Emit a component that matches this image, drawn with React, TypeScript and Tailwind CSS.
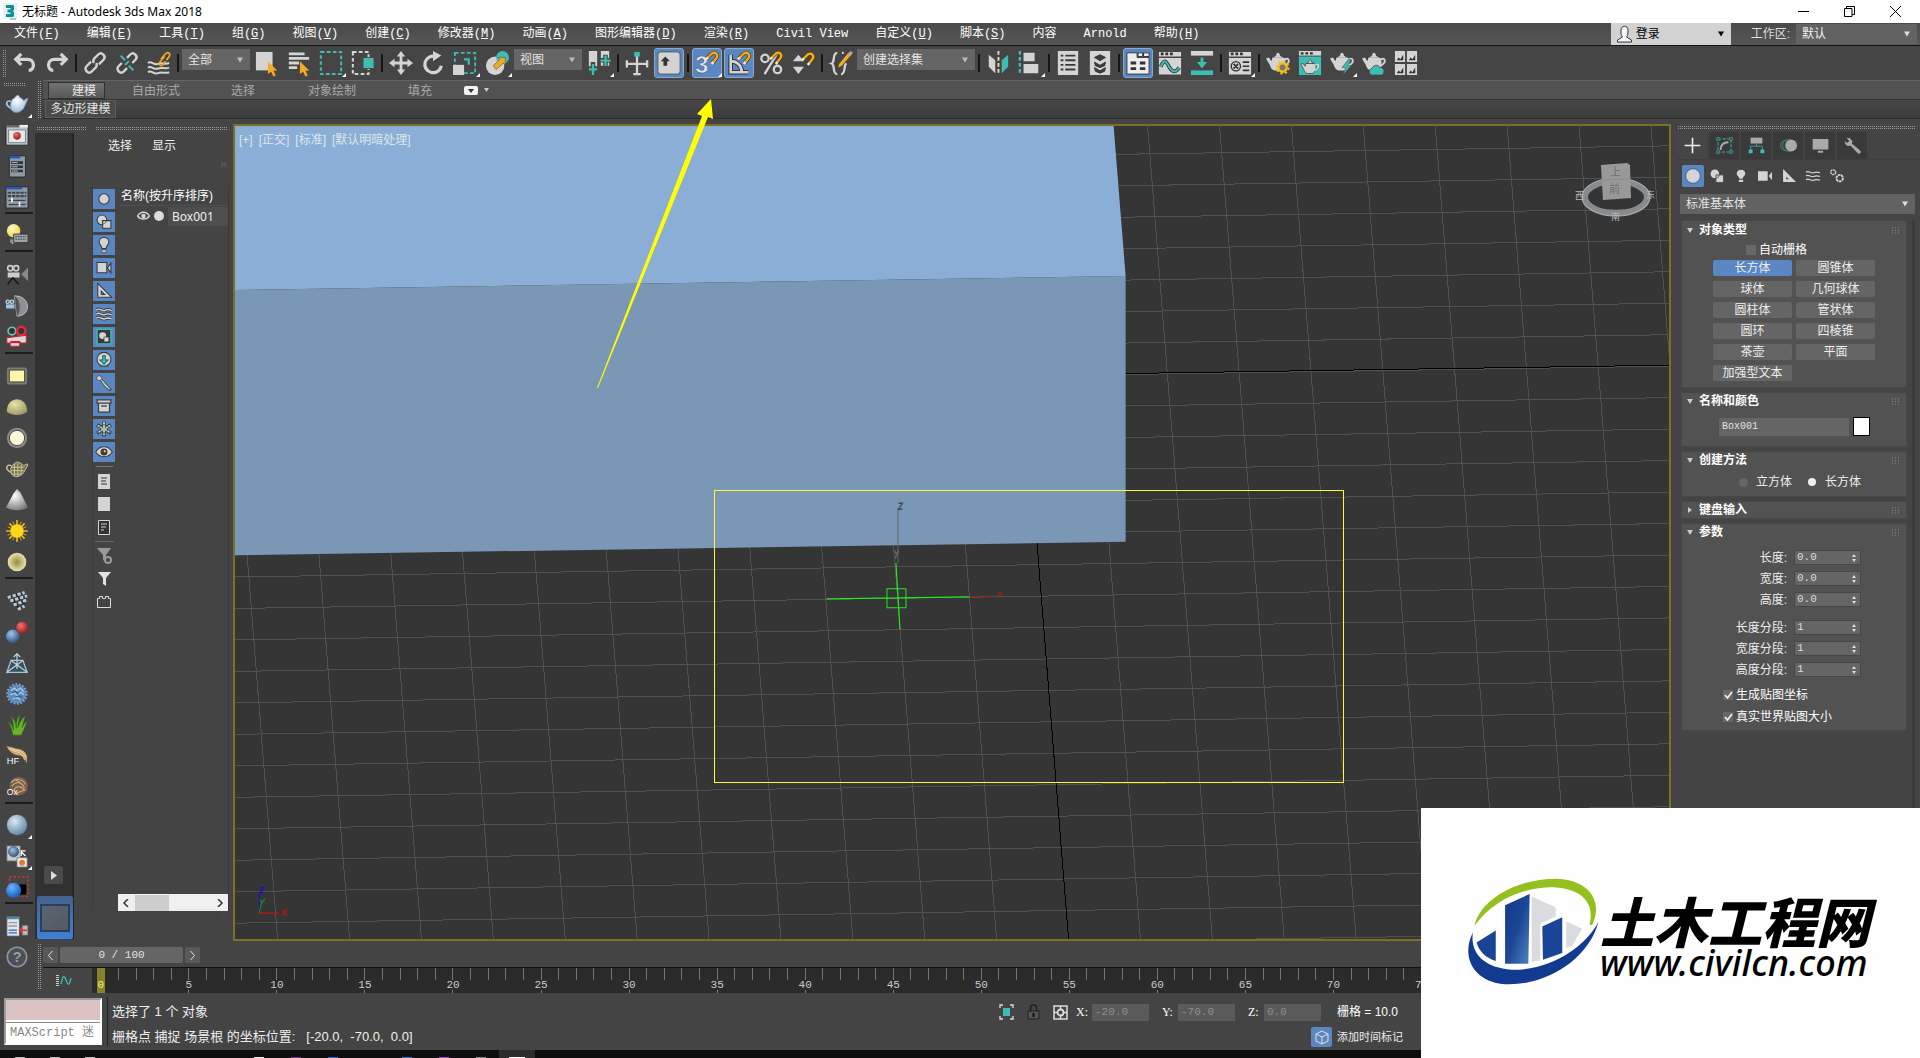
import React from "react";
import type { ReactNode } from "react";

const MONO = "font-['Liberation_Mono','Noto_Sans_CJK_SC',monospace]";
const SANS = "font-['Liberation_Sans','Noto_Sans_CJK_SC',sans-serif]";
const L = "#d4d4d4";
const T = "#3fbcb4";
const O = "#f2ac22";

/* ---------- small building blocks ---------- */

function Svg({ children, size = 26 }: { children: ReactNode; size?: number }) {
  return (
    <svg width={size} height={size} viewBox="0 0 26 26" fill="none" aria-hidden="true" className="overflow-visible">
      {children}
    </svg>
  );
}

function Tool({ label, active, corner, children }: { label: string; active?: boolean; corner?: boolean; children: ReactNode }) {
  return (
    <button aria-label={label} className="relative flex h-[34px] w-[32px] shrink-0 items-center justify-center">
      <span className={active ? "flex h-[30px] w-[30px] items-center justify-center rounded-[3px] border border-[#8aa9d0] bg-[#5a87c2]" : "flex"}>
        <Svg size={24}>{children}</Svg>
      </span>
      {corner && <span className="absolute right-[1px] bottom-[3px] size-[4px] bg-white [clip-path:polygon(100%_0,100%_100%,0_100%)]" />}
    </button>
  );
}

const Sep = () => (
  <div className="flex w-[6px] shrink-0 justify-center">
    <span className="h-[18px] w-[2px] bg-[#161616]" />
  </div>
);

function Caret({ color = "#dddddd" }: { color?: string }) {
  return (
    <svg width="8" height="6" viewBox="0 0 8 6" aria-hidden="true" className="pointer-events-none mr-[6px] self-center justify-self-end [grid-area:1/1]">
      <path d="M1 0.500h6L4 5.500z" fill={color} />
    </svg>
  );
}

function Drop({ label, value, className, caret }: { label: string; value: string; className: string; caret?: string }) {
  return (
    <div className={`grid shrink-0 ${className}`}>
      <select aria-label={label} className="h-full w-full appearance-none bg-transparent pl-[6px] outline-none [grid-area:1/1]">
        <option>{value}</option>
      </select>
      <Caret color={caret} />
    </div>
  );
}

const DOTS = "bg-[linear-gradient(#444444_1px,transparent_1px),linear-gradient(90deg,#444444_1px,#9a9a9a_1px)] bg-[size:2px_2px]";

const DotsH = ({ className = "" }: { className?: string }) => <div className={`h-[4px] ${DOTS} ${className}`} />;

/* ---------- title and menu ---------- */

function TitleBar() {
  return (
    <header className="flex h-[23px] shrink-0 items-center bg-white text-black">
      <svg width="17" height="18" viewBox="0 0 17 18" className="ml-[2px]" aria-hidden="true">
        <rect x="1" y="0" width="14" height="16" fill="#e2f1f2" />
        <path d="M4 2h7l1 1v4l-1.500 1L12 9v4l-1 1H4v-3h4.500V9.500H5.500v-3h3V5H4z" fill="#128e93" />
        <path d="M8 16h6" stroke="#5aa" strokeWidth="1" />
      </svg>
      <h1 className="ml-[3px] font-['Noto_Sans','Noto_Sans_CJK_SC',sans-serif] text-[12px] leading-[16px]">无标题 - Autodesk 3ds Max 2018</h1>
      <div className="mr-[2px] ml-auto flex">
        <button aria-label="最小化" className="flex h-[23px] w-[46px] items-center justify-center">
          <svg width="11" height="11" viewBox="0 0 11 11"><path d="M0 5.500h11" stroke="#000" /></svg>
        </button>
        <button aria-label="还原" className="flex h-[23px] w-[46px] items-center justify-center">
          <svg width="11" height="11" viewBox="0 0 11 11" fill="none" stroke="#000"><path d="M.5 2.500h7.500v8H.5zM2.500 2.500v-2h8v8H8" /></svg>
        </button>
        <button aria-label="关闭" className="flex h-[23px] w-[46px] items-center justify-center">
          <svg width="11" height="11" viewBox="0 0 11 11" stroke="#000"><path d="M0 0l11 11M11 0L0 11" /></svg>
        </button>
      </div>
    </header>
  );
}

const MENUS: [string, string?][] = [
  ["文件", "F"], ["编辑", "E"], ["工具", "T"], ["组", "G"], ["视图", "V"], ["创建", "C"], ["修改器", "M"], ["动画", "A"],
  ["图形编辑器", "D"], ["渲染", "R"], ["Civil View"], ["自定义", "U"], ["脚本", "S"], ["内容"], ["Arnold"], ["帮助", "H"],
];

function MenuBar() {
  return (
    <nav className="flex h-[23px] shrink-0 items-center border-b border-[#161616] bg-linear-to-b from-[#4a4a4a] to-[#565656]">
      <div className={`flex gap-[27px] pl-[14px] text-[12px] leading-[20px] whitespace-nowrap text-white ${MONO}`}>
        {MENUS.map(([t, k]) => (
          <button key={t}>{t}{k && <>(<u>{k}</u>)</>}</button>
        ))}
      </div>
      <div className="ml-auto flex h-full items-center text-[13px]">
        <div className="grid h-[22px] w-[120px] bg-[#d2d2d2] text-black">
          <svg width="17" height="18" viewBox="0 0 17 18" className="ml-[5px] self-center [grid-area:1/1]" aria-hidden="true">
            <path d="M5 5c0-5 7-5 7 0v3c0 2-1 3-1.500 4l5 3v2h-14v-2l5-3C6 11 5 10 5 8z" fill="#f4f8ff" stroke="#333" />
          </svg>
          <select aria-label="登录" className="h-[22px] w-full appearance-none bg-transparent pl-[25px] text-[12px] outline-none [grid-area:1/1]"><option>登录</option></select>
          <Caret color="#000000" />
        </div>
        <span className="mr-[6px] ml-[20px] text-[12px] text-[#dddddd]">工作区:</span>
        <Drop label="工作区" value="默认" className="mr-[3px] h-[20px] w-[121px] bg-[#626262] text-[12px] text-[#eeeeee]" />
      </div>
    </nav>
  );
}

/* ---------- main toolbar ---------- */

const Magnet = ({ x = 0, y = 0 }: { x?: number; y?: number }) => (
  <g transform={`translate(${x} ${y})`}>
    <path d="M13 8l5-5c4-3 8 1 5 5l-4 5" stroke="#5b3d05" strokeWidth="4" />
    <path d="M13 8l5-5c4-3 8 1 5 5l-4 5" stroke={O} strokeWidth="2.500" />
    <path d="M12 9l2-2M18 14l2-2" stroke="#eee" strokeWidth="2.500" />
  </g>
);
const Cursor = ({ x = 14, y = 11 }: { x?: number; y?: number }) => (
  <path transform={`translate(${x} ${y})`} d="M0 0l10 10-4 .5 2.500 5-2.500 1-2.500-5L0 14z" fill={O} />
);
const Pot = ({ outline }: { outline?: boolean }) => (
  <g stroke={outline ? "#3a3a3a" : "none"} strokeWidth="1">
    <path d="M7 7h12c3 3 3 8 0 11l-2 3H9c-3-1-4-3-5-6L0 8l3-1 3 4z" fill={L} />
    <path d="M11 5c0-4 4-4 4 0l3 2H8z" fill={L} />
    <path d="M20 9c5-2 6 2 3 5l-4 3" stroke={L} strokeWidth="2" fill="none" />
  </g>
);
const Window = () => (
  <>
    <path d="M1 1h24v5H1zM1 7.500h24v18H1z" fill={L} />
    <path d="M3 3h3M8 3h3M13 3h3" stroke="#333" strokeWidth="3" />
  </>
);

function Toolbar() {
  return (
    <div role="toolbar" className="flex h-[34px] shrink-0 items-center bg-[#454545]">
      <div className={`mr-[3px] ml-[2px] h-[28px] w-[4px] ${DOTS}`} />
      <Tool label="撤消"><path d="M9 3L3 9l6 6M4 9h12c8 0 8 12 1 12" stroke={L} strokeWidth="3.500" /></Tool>
      <Tool label="重做"><path d="M17 3l6 6-6 6M22 9H10c-8 0-8 12-1 12" stroke={L} strokeWidth="3.500" /></Tool>
      <Sep />
      <Tool label="链接"><g transform="rotate(-45 13 13)" stroke={L} strokeWidth="2.600"><path d="M11 9H4c-5 0-5 8 0 8h6c2 0 3-1 4-3" /><path d="M15 17h7c5 0 5-8 0-8h-6c-2 0-3 1-4 3" /></g></Tool>
      <Tool label="断开链接"><g transform="rotate(-45 13 13)" stroke={L} strokeWidth="2.600"><path d="M9 9H4c-5 0-5 8 0 8h5" /><path d="M17 17h5c5 0 5-8 0-8h-5" /></g><path d="M6 5l5 5M15 16l5 5M11 15l4-4" stroke={T} strokeWidth="2.200" /></Tool>
      <Tool label="绑定到空间扭曲"><path d="M1 13c4-3 6 3 11 1s7 1 12-1M1 18c4-3 6 3 11 1s7 1 12-1M1 23c4-3 6 3 11 1s7 1 12-1" stroke={L} strokeWidth="2.200" /><path d="M15 9l5-6c3-3 6 0 4 3l-3 4M19 6l-5 6c-2 3 1 5 3 3l3-4" stroke={O} strokeWidth="1.800" /></Tool>
      <Sep />
      <Drop label="选择过滤器" value="全部" className="mx-px mb-[7px] h-[21px] w-[68px] bg-[#656565] text-[12px] text-[#e4e4e4]" caret="#bbbbbb" />
      <Tool label="选择对象"><path d="M1 1h18v20H1z" fill={L} /><Cursor /></Tool>
      <Tool label="按名称选择"><path d="M2 3h17M2 8h22M2 13h11M2 18h9" stroke={L} strokeWidth="3" /><Cursor /></Tool>
      <Tool label="矩形选择区域" corner><path d="M2 1h22v24H2z" stroke={T} strokeWidth="2.200" strokeDasharray="4 2.500" /></Tool>
      <Tool label="窗口/交叉"><path d="M2 1h17v24H2z" stroke={L} strokeWidth="2.200" strokeDasharray="4 2.500" /><path d="M13 7h12v12H13z" fill={T} stroke="#454545" /></Tool>
      <Sep />
      <Tool label="移动"><path d="M13 0l4.500 6h-3v5.500H20v-3l6 4.500-6 4.500v-3h-5.500V20h3L13 26l-4.500-6h3v-5.500H6v3L0 13l6-4.500v3h5.500V6h-3z" fill={L} /></Tool>
      <Tool label="旋转"><path d="M16 6a9 9 0 1 0 6 10" stroke={L} strokeWidth="3.500" /><path d="M13 0l9 5-9 6z" fill={L} /></Tool>
      <Tool label="缩放" corner><path d="M2 2h22v22H2z" stroke={T} strokeWidth="2" strokeDasharray="4 2.500" /><path d="M0 15h12v11H0z" fill={L} /><path d="M12 9h5v6" stroke={T} strokeWidth="2.500" /></Tool>
      <Tool label="放置" corner><circle cx="11" cy="16" r="10" fill={L} /><circle cx="19" cy="7" r="7" fill={T} /><path d="M9 16l7-7-2-2h8v8l-2-2-8 7z" fill={O} stroke="#555" strokeWidth=".7" /></Tool>
      <Drop label="参考坐标系" value="视图" className="mx-px mb-[7px] h-[21px] w-[68px] bg-[#656565] text-[12px] text-[#e4e4e4]" caret="#bbbbbb" />
      <Tool label="使用轴点中心" corner><path d="M2 0h9v18H2zM15 0h9v16h-9z" fill={L} /><path d="M6.500 12v14M0 19h13M20 4v12M13 10h13" stroke="#454545" strokeWidth="5" /><path d="M6.500 14v12M2 20h9M20 5v11M14.500 10.500h11" stroke={T} strokeWidth="2.500" /></Tool>
      <Sep />
      <Tool label="选择并操纵"><path d="M1 14h24M13 5v20" stroke={L} strokeWidth="2.500" /><path d="M2 10v8M24 10v8M9 25h8" stroke={L} strokeWidth="2.500" /><path d="M10 1h6v5h-6z" fill={T} /></Tool>
      <Tool label="键盘快捷键覆盖" active><rect x="1" y="1" width="24" height="24" rx="3" fill={L} stroke="#555" /><path d="M9 6l5 5h-3v5H7v-5H4z" fill="#333" /></Tool>
      <Sep />
      <Tool label="三维捕捉" active corner><text x="0" y="24" fontSize="26" fontWeight="bold" fontFamily="Liberation Sans" fill="#e8e8e8" stroke="#3d5c88" strokeWidth=".6">3</text><Magnet /></Tool>
      <Tool label="角度捕捉" active><path d="M4 4v19h19M4 11c7 0 12 5 12 12" stroke="#333" strokeWidth="5" /><path d="M4 4v19h19M4 11c7 0 12 5 12 12" stroke={L} strokeWidth="2.800" /><Magnet /></Tool>
      <Tool label="百分比捕捉"><circle cx="6.500" cy="8" r="4" stroke={L} strokeWidth="2.500" /><circle cx="20" cy="20" r="4" stroke={L} strokeWidth="2.500" /><path d="M19 4L6 25" stroke={L} strokeWidth="2.500" /><Magnet /></Tool>
      <Tool label="微调器捕捉"><path d="M8 4l6 7H2zM8 25l6-8H2z" fill={L} /><Magnet y={1} /></Tool>
      <Sep />
      <Tool label="编辑命名选择集"><path d="M9 2c-6 0-2 10-6 11.500C7 15 3 25 9 25M13 25c6 0 2-10 6-11.500M16 2h-2" stroke={L} strokeWidth="2.500" /><path d="M11 14l10-12 3 2-10 12-4 2z" fill={O} /><path d="M20 4l3-4 3 2-3 4z" fill="#c9a08e" /></Tool>
      <Drop label="命名选择集" value="创建选择集" className="mr-px mb-[7px] h-[21px] w-[118px] bg-[#656565] text-[12px] text-[#e4e4e4]" caret="#bbbbbb" />
      <Sep />
      <Tool label="镜像"><path d="M3 4l7 6v14l-7-7z" fill={L} /><path d="M24 4l-7 6v14l7-7z" fill={T} /><path d="M13.500 0v26" stroke="#f1dcb8" strokeWidth="2" strokeDasharray="4 2.500" /></Tool>
      <Tool label="对齐" corner><path d="M2 0v26" stroke={T} strokeWidth="2.500" strokeDasharray="4 2.500" /><path d="M6 2h12v9H6zM6 14h16v10H6z" fill={L} /></Tool>
      <Sep />
      <Tool label="层资源管理器"><path d="M2 0h22v26H2z" fill={L} /><path d="M5 5h3M10 5h11M5 10h3M10 10h11M5 15h3M10 15h11M5 20h3M10 20h11" stroke="#3a3a3a" strokeWidth="2" /></Tool>
      <Tool label="场景资源管理器"><path d="M2 0h22v26H2z" fill={L} /><path d="M13 4l6 3-6 3.500L7 7zM7 12l6 3.500 6-3.500-1 4-5 2-5-2zM7 18l6 3.500 6-3.500-1 4-5 2-5-2z" fill="#3a3a3a" stroke="#3a3a3a" /></Tool>
      <Sep />
      <Tool label="切换功能区" active><path d="M1 2h11v5h13v18H1z" fill="#eee" stroke="#333" /><path d="M13 2h5v4h-5zM19 2h6v4h-6z" fill="#eee" stroke="#333" /><path d="M5 13h6M15 13h6M5 19h6M15 19h6" stroke="#333" strokeWidth="3" /></Tool>
      <Tool label="曲线编辑器"><Window /><path d="M3 17c4-10 6-5 9 0s6 8 11 1" stroke="#333" strokeWidth="4" /><path d="M3 17c4-10 6-5 9 0s6 8 11 1" stroke={T} strokeWidth="2.200" /></Tool>
      <Tool label="图解视图"><path d="M1 0h24v5H1z" fill={L} /><path d="M1 21h24v5H1z" fill={T} /><path d="M11.500 7h3v5h4L13 19l-5.500-7h4z" fill={T} /></Tool>
      <Sep />
      <Tool label="材质编辑器" corner><Window /><circle cx="8.500" cy="16.500" r="5" stroke="#333" strokeWidth="1.500" /><path d="M6 14l5 5M11 14l-5 5M16 12h7M16 16.500h7M16 21h7" stroke="#333" strokeWidth="1.800" /></Tool>
      <Sep />
      <Tool label="渲染设置"><Pot /><circle cx="18" cy="18" r="4.500" fill="#777" stroke="#f5c211" strokeWidth="2.500" /><circle cx="18" cy="18" r="6.500" stroke="#f5c211" strokeWidth="2" strokeDasharray="2.500 2.500" /></Tool>
      <Tool label="渲染帧窗口"><path d="M1 6h24v20H1z" fill={T} /><path d="M1 0h24v5H1z" fill={L} /><path d="M3 2.500h3M8 2.500h3M13 2.500h3" stroke="#333" strokeWidth="2.500" /><g transform="translate(3 8) scale(.78)"><Pot outline /></g></Tool>
      <Tool label="渲染产品" corner><Pot /><path d="M20 9l-7 9h4l-3 8 9-10h-4l4-7z" fill={T} stroke="#454545" strokeWidth=".6" /></Tool>
      <Tool label="在云中渲染"><Pot /><path d="M11 26c-4 0-4-7 0-7 1-5 8-4 8-1 6-1 6 8 2 8z" fill={T} stroke="#454545" strokeWidth=".8" /></Tool>
      <Tool label="打开渲染库"><path d="M1 0h11v12H1zM14 0h11v12H14zM1 14h11v12H1zM14 14h11v12H14z" fill={L} /><path d="M3 10l2-3 2 2 3-5v6zM16 10l2-3 2 2 3-5v6zM3 24l2-3 2 2 3-5v6zM16 24l2-3 2 2 3-5v6z" fill="#333" /></Tool>
    </div>
  );
}

/* ---------- left shortcut bar ---------- */

const Bullet = ({ fill, r = 10 }: { fill: string; r?: number }) => <circle cx="13" cy="13" r={r} fill={fill} />;

const SHORTCUTS: [string, ReactNode][][] = [
  [
    ["茶壶", <><path d="M6 10c-5-2-7 3-3 6l4 3" stroke="#a9c6e0" strokeWidth="2" /><path d="M7 8c2-2 3-2 4-3 1-3 5-3 5 0 2 1 4 2 5 4l4-3 1 1-5 11c-2 3-5 5-9 5-6 0-9-7-5-15z" fill="url(#ice)" stroke="#6f8aa3" /></>],
    ["渲染窗口", <><path d="M0 1h26v24H0z" fill="#b9c6d2" stroke="#222" /><path d="M0 1h16v3H0z" fill="#666" /><path d="M16 1h10v3H16z" fill="#eee" /><path d="M3 7h20v15H3z" fill="#e6e9ec" stroke="#777" /><circle cx="13" cy="14" r="4.500" fill="url(#red)" /></>],
    ["列表", <><path d="M4 1h19v25H4z" fill="#8d9aa6" stroke="#222" /><path d="M4 1h13v3H4z" fill="#2458b8" /><path d="M6 9h14M6 14h14M6 19h14" stroke="#333" strokeWidth="3" /><path d="M7 9h7M7 14h7M7 19h7" stroke="#ccc" strokeWidth="1" /></>],
    ["混合器", <><path d="M0 1h26v25H0z" fill="#8d9aa6" stroke="#222" /><path d="M0 1h19v3H0z" fill="#2458b8" /><path d="M2 8h22M2 12h22" stroke="#444" strokeWidth="2.500" strokeDasharray="4 1" /><path d="M3 17h20M3 22h20" stroke="#222" /><path d="M7 14v5M16 19v5" stroke="#fff" strokeWidth="2" /></>],
  ],
  [["灯光列表", <><circle cx="9" cy="8" r="8" fill="url(#lamp)" /><path d="M5 18h7l-1 4-3 2-3-2z" fill="#999" /><path d="M9 12h17v10H9z" fill="#9aa5ae" stroke="#333" /><path d="M11 15h13M11 18h13" stroke="#333" strokeDasharray="2 1" /></>]],
  [
    ["摄影机", <><circle cx="5" cy="5" r="3" stroke="#ccc" strokeWidth="2" /><circle cx="12" cy="5" r="3" stroke="#ccc" strokeWidth="2" /><path d="M2 10h14v6H2z" fill="#ccc" /><path d="M18 12l8-8v16z" fill="#888" /><path d="M8 16l-6 8M8 16l7 8" stroke="#111" strokeWidth="1.500" /></>],
    ["穹顶摄影机", <><path d="M10 1c20 0 20 24 3 24z" fill="#8d9095" stroke="#c5c8cc" /><path d="M10 1c7 3 8 19 3 24" fill="#555" /><circle cx="2" cy="8" r="2" stroke="#bde" strokeWidth="1.500" /><circle cx="7" cy="8" r="2" stroke="#bde" strokeWidth="1.500" /><path d="M0 11h10v5H0z" fill="#9cc3dc" /></>],
    ["物理摄影机", <><circle cx="7" cy="6" r="4.500" fill="#333" stroke="#6fc3b4" strokeWidth="2" /><circle cx="18" cy="6" r="5" fill="#333" stroke="#e02b3c" strokeWidth="3" /><path d="M1 14l14-2 9-1v9H16v4H5v-4H1z" fill="#d8d8d8" stroke="#d11f30" strokeWidth="1.200" /><path d="M5 19h12" stroke="#d11f30" strokeWidth="2.500" /></>],
  ],
  [
    ["平面光", <><rect x="1" y="3" width="24" height="20" rx="3" fill="#8c8c7e" opacity=".8" /><path d="M4 6h18v14H4z" fill="#fdf6ac" stroke="#333" /></>],
    ["穹顶光", <path d="M1 18c0-19 24-19 24 0-4 6-20 6-24 0z" fill="url(#gold)" />],
    ["球体光", <><Bullet fill="#8a8a80" r={12} /><circle cx="13" cy="13" r="9" fill="#fafad8" stroke="#333" /></>],
    ["网格光", <><path d="M6 9c-5-2-7 3-3 6l4 3" stroke="#d6d0a8" strokeWidth="1.500" /><path d="M7 9c2-2 3-2 5-4h3c2 1 4 2 6 4l4-2 1 1-5 9c-2 3-5 5-9 5-6 0-8-7-5-13z" fill="#77704c" stroke="#d6d0a8" /><path d="M6 11h15M6 15h15M7 19h11M10 7v14M14 6v16M18 8v11" stroke="#d6d0a8" /></>],
    ["IES 光", <path d="M13 0l4 4 9 18c-6 4-20 4-26 0L9 5z" fill="url(#grey)" />],
    ["太阳", <><path d="M13 0v26M0 13h26M4 4l18 18M22 4L4 22" stroke="#f0b50a" strokeWidth="2" /><path d="M8 2l10 22M2 8l22 10M18 2L8 24M2 18L24 8" stroke="#f0b50a" strokeWidth="1" /><Bullet fill="#ffd61c" r={8} /></>],
    ["环境光", <Bullet fill="url(#disc)" r={11} />],
  ],
  [
    ["阵列", <><path d="M2 10L22 4M5 14l20-6M9 19l15-6M14 24l9-5M5 7l11 16M12 4l10 13" stroke="#222b33" strokeWidth="2" /><path d="M2 9l20-6M5 13l20-6M9 18l15-6M14 23l8-4" stroke="#b8cad6" strokeWidth="3.500" strokeDasharray="4 2" /></>],
    ["分子", <><circle cx="8" cy="18" r="8" fill="url(#blue)" /><circle cx="19" cy="8" r="7" fill="url(#red)" /></>],
    ["代理", <><path d="M6 10h14l5 14H1z" fill="#37505f" stroke="#a8c5d4" strokeWidth="1.500" /><path d="M6 10l19 14M20 10L1 24M13 20V2M9 6l4-4 4 4" stroke="#b8d2df" strokeWidth="1.500" /></>],
    ["置换", <><circle cx="13" cy="13" r="11" fill="#5b8abb" /><circle cx="13" cy="13" r="11.500" stroke="#7ba8d2" strokeWidth="2.500" strokeDasharray="2 2" /><path d="M6 9l4-3 3 3 4-3 4 4M5 14l5-2 3 3 5-4 3 3M8 19l4-2 5 3" stroke="#a5cbea" strokeWidth="1.600" /><path d="M7 12l4-2 4 3M10 17l5-2 4 2" stroke="#2f5a88" strokeWidth="1.200" /></>],
    ["草地", <path d="M8 25C7 17 5 12 1 8c5 3 7 7 8 11C9 11 8 7 6 3c5 4 6 9 6 14 0-7 1-11 4-17 0 7-2 11-2 16 2-6 4-10 9-14-2 6-3 10-4 14 2-4 4-6 6-8-2 6-4 11-7 17z" fill="#69b12c" stroke="#2e6410" strokeWidth=".6" />],
    ["毛发", <><path d="M0 1c6 0 10 3 14 3 10 1 14 10 10 19-1-5-3-9-7-10C9 13 3 8 0 1z" fill="#c9a777" stroke="#594125" /><path d="M3 4c6 5 16 2 19 14M6 4c6 3 14 2 17 10" stroke="#f0dcba" /><text x="1" y="23" fontSize="11" fontFamily="Liberation Sans" fill="#fff">HF</text></>],
    ["毛球", <><circle cx="15" cy="12" r="11" fill="#7a5f47" /><path d="M6 8c5-6 14-5 17 2M7 12c4-6 11-5 14 1M9 17c3-6 10-5 13 0M12 21c4-3 8-3 11-5M10 4c4 2 9 4 12 10" stroke="#c7a883" strokeWidth="1.300" /><text x="1" y="22" fontSize="10" fontFamily="Liberation Sans" fill="#fff">Ox</text></>],
  ],
  [
    ["材质球", <Bullet fill="url(#sphere)" r={12} />],
    ["材质转换", <><path d="M1 1h16v18H1z" fill="#c8cdd2" stroke="#666" /><circle cx="9" cy="8" r="6" fill="url(#blue)" stroke="#456" /><path d="M13 15h12v11H13z" fill="#eee" stroke="#777" /><circle cx="19" cy="21" r="3.500" fill="#e07b2c" /><path d="M23 13l-5-5M18 13V7h5" stroke="#fff" strokeWidth="1.500" /></>],
    ["区域渲染", <><path d="M15 10h9v12h-9z" fill="#000" /><path d="M4 1h22v23H4z" stroke="#e33" strokeWidth="1.300" strokeDasharray="3 2" /><circle cx="9" cy="17" r="9" fill="url(#vivid)" /></>],
  ],
  [
    ["导出", <><path d="M1 2h15v23H1z" fill="#dfe4e8" stroke="#555" /><path d="M1 2h15v3H1z" fill="#4d89a8" /><path d="M3 9h10M3 13h10" stroke="#999" strokeWidth="1.500" /><path d="M3 18h10M3 21h10" stroke="#36c" strokeWidth="1.500" /><path d="M19 12h7v12h-7z" fill="#bbb" stroke="#555" /><path d="M25 18h-9M19 15l-3 3 3 3" stroke="#d33" strokeWidth="2" /></>],
    ["帮助", <><circle cx="13" cy="13" r="11.500" fill="#4b5056" stroke="#8d949b" strokeWidth="2" /><text x="8" y="19" fontSize="17" fontWeight="bold" fontFamily="Liberation Sans" fill="#999fa6">?</text></>],
  ],
];

function Gradients() {
  const g = (id: string, a: string, b: string) => (
    <radialGradient id={id} cx=".38" cy=".32" r=".75"><stop offset="0" stopColor={a} /><stop offset="1" stopColor={b} /></radialGradient>
  );
  return (
    <svg width="0" height="0" className="absolute" aria-hidden="true">
      <defs>
        {g("ice", "#ffffff", "#8fb4d6")}{g("red", "#f0776f", "#8f1414")}{g("lamp", "#fffbd0", "#e6cf3c")}
        {g("gold", "#e9e4a8", "#9a9460")}{g("grey", "#ffffff", "#777777")}{g("blue", "#9fc4e4", "#274f7c")}
        {g("sphere", "#d9e8f2", "#5b829e")}{g("vivid", "#6db6ff", "#0c55b8")}
        <radialGradient id="disc"><stop offset="0" stopColor="#8d8a4a" /><stop offset=".7" stopColor="#d0cc8c" /><stop offset="1" stopColor="#e4e2b0" /></radialGradient>
        <linearGradient id="tower" x1="0" y1="0" x2="1" y2="1"><stop offset="0" stopColor="#10378e" /><stop offset=".5" stopColor="#1c4796" /><stop offset="1" stopColor="#4d86bd" /></linearGradient>
      </defs>
    </svg>
  );
}

function ShortcutBar() {
  const after = ["mb-[5px]", "mb-[7px]", "mb-[6px]", "mb-[6px]", "mb-[5px]", "mb-[6px]"];
  const corners = ["茶壶", "材质球", "材质转换"];
  return (
    <aside className="flex w-[35px] shrink-0 flex-col bg-[#444444] pt-[2px]">
      <DotsH className="mb-[2px] ml-[3px] w-[22px] shrink-0" />
      {SHORTCUTS.map((group, i) => (
        <React.Fragment key={i}>
          {group.map(([name, art]) => (
            <button key={name} aria-label={name} className="relative flex h-[31px] w-[34px] shrink-0 items-center justify-center">
              <Svg size={22}>{art}</Svg>
              {corners.includes(name) && <span className="absolute right-[2px] bottom-[1px] size-[4px] bg-white [clip-path:polygon(100%_0,100%_100%,0_100%)]" />}
            </button>
          ))}
          {i < 6 && <div className={`ml-[5px] h-[2px] w-[28px] shrink-0 bg-[#1c1c1c] ${after[i]}`} />}
        </React.Fragment>
      ))}
    </aside>
  );
}

/* ---------- ribbon ---------- */

function Ribbon() {
  return (
    <div className="flex h-[39px] shrink-0">
      <div className={`mx-[2px] h-[38px] w-[4px] ${DOTS}`} />
      <div className="flex-1 text-[12px]">
        <div className="flex h-[20px] items-end border-t border-b border-t-[#666666] border-b-[#333333] bg-[#525252] pl-[5px] text-[#a9a9a9]">
          <button className="h-[17px] w-[57px] border border-[#303030] bg-linear-to-b from-[#727272] to-[#585858] pl-[15px] leading-[16px] text-[#e6e6e6]">建模</button>
          <button className="ml-[27px] leading-[16px]">自由形式</button>
          <button className="ml-[51px] leading-[16px]">选择</button>
          <button className="ml-[53px] leading-[16px]">对象绘制</button>
          <button className="ml-[52px] leading-[16px]">填充</button>
          <button aria-label="功能区选项" className="ml-[32px] flex h-[18px] items-center gap-[6px]">
            <svg width="14" height="9" viewBox="0 0 14 9"><rect width="14" height="9" rx="2" fill="#f0f0f0" /><path d="M4 3h6L7 7z" fill="#333" /></svg>
            <svg width="5" height="4" viewBox="0 0 5 4"><path d="M0 0h5L2.500 4z" fill="#ccc" /></svg>
          </button>
        </div>
        <div className="h-[19px] border-b border-[#2c2c2c] bg-linear-to-b from-[#494949] to-[#3b3b3b] pl-[2px]">
          <button className="h-[18px] w-[71px] border border-[#5c5c5c] bg-[#4a4a4a] leading-[16px] text-[#e2e2e2]">多边形建模</button>
        </div>
      </div>
    </div>
  );
}

/* ---------- scene explorer ---------- */

const K = "#3a3a3a";
const FILTERS: [string, ReactNode][] = [
  ["几何体", <circle cx="13" cy="13" r="7.500" fill={L} stroke={K} strokeWidth="1.500" />],
  ["图形", <><circle cx="10" cy="10" r="7" fill={L} stroke={K} strokeWidth="1.500" /><path d="M11 11h12v11H11z" fill={L} stroke={K} strokeWidth="1.500" /><path d="M11 16c3 0 6-3 6-6" stroke={K} /></>],
  ["灯光", <><path d="M6 9c0-9 14-9 14 0 0 4-4 5-4 9h-6c0-4-4-5-4-9z" fill={L} stroke={K} strokeWidth="1.500" /><path d="M10 20h6v4h-6z" fill={L} stroke={K} /></>],
  ["摄影机", <path d="M3 5h14v15H3zM18 13l5-7v14z" fill={L} stroke={K} strokeWidth="1.500" />],
  ["辅助对象", <path d="M4 2l20 20H4zM9 13v5h5z" fillRule="evenodd" fill={L} stroke={K} strokeWidth="1.500" />],
  ["空间扭曲", <><path d="M2 7c5-4 8 3 12 1s6-2 10 0M2 13c5-4 8 3 12 1s6-2 10 0M2 19c5-4 8 3 12 1s6-2 10 0" stroke={K} strokeWidth="4.500" /><path d="M2 7c5-4 8 3 12 1s6-2 10 0M2 13c5-4 8 3 12 1s6-2 10 0M2 19c5-4 8 3 12 1s6-2 10 0" stroke={L} strokeWidth="2" /></>],
  ["组", <><path d="M3 2h20v21H3z" fill={K} stroke={T} strokeWidth="2" /><circle cx="11" cy="11" r="5" fill={L} /><path d="M13 13h7v7h-7z" fill={L} stroke={K} /></>],
  ["外部参照", <><circle cx="13" cy="12" r="10" fill={L} stroke={K} strokeWidth="1.500" /><path d="M11 7h4v6h4l-6 6-6-6h4zM6 22h14" fill={T} stroke="#24706b" strokeWidth="1.500" /></>],
  ["骨骼", <><path d="M9 8l14 15c-5-2-10-6-14-15z" fill={L} stroke={K} strokeWidth="3" /><circle cx="6" cy="6" r="3.500" fill={L} stroke={K} /><path d="M9 8l13 14c-6-2-10-7-13-14z" fill={L} stroke={L} /></>],
  ["容器", <><path d="M3 4h20v5H3zM5 9h16v13H5z" fill={L} stroke={K} strokeWidth="1.800" /><path d="M9 13h8" stroke={K} strokeWidth="2" /></>],
  ["冻结", <><path d="M13 2v22M3 7l20 12M23 7L3 19" stroke={K} strokeWidth="5" /><path d="M13 3v20M4 8l18 10M22 8L4 18" stroke={L} strokeWidth="2.500" strokeDasharray="3 1" /><circle cx="13" cy="13" r="3" fill="#8fc9b8" /></>],
  ["隐藏", <><path d="M1 13c6-10 18-10 24 0-6 9-18 9-24 0z" fill={L} stroke={K} strokeWidth="1.500" /><circle cx="13" cy="13" r="5" fill="#4a3a28" /><circle cx="14" cy="12" r="1.500" fill="#ddd" /></>],
];

function SceneExplorer() {
  return (
    <section className="flex w-[159px] shrink-0 flex-col pt-[7px]">
      <DotsH className="ml-[21px] w-[132px]" />
      <div className="mt-[4px] flex gap-[20px] pl-[34px] text-[12px] leading-[24px] text-[#eeeeee]">
        <button>选择</button>
        <button>显示</button>
      </div>
      <div className="h-[28px] pr-[6px] text-right text-[12px] leading-[12px] text-[#5c5c80]">»</div>
      <div className="flex flex-1 pl-[18px]">
        <div className="flex w-[24px] flex-col gap-[3px] border-l border-[#3c3c3c] pt-[3px]">
          {FILTERS.map(([name, art]) => (
            <button key={name} aria-label={name} className="flex h-[20px] w-[22px] items-center justify-center bg-[#5a87c2]"><Svg size={18}>{art}</Svg></button>
          ))}
          <div className="mx-[3px] my-px h-px bg-[#777777]" />
          <button aria-label="全部" className="flex h-[20px] w-[22px] items-center justify-center"><svg width="12" height="15" viewBox="0 0 12 15"><path d="M0 0h12v15H0z" fill={L} /><path d="M3 4h6M3 7h5M3 10h6" stroke="#333" /></svg></button>
          <button aria-label="无" className="flex h-[20px] w-[22px] items-center justify-center"><svg width="12" height="14" viewBox="0 0 12 14"><path d="M0 0h12v14H0z" fill={L} /></svg></button>
          <button aria-label="反转" className="flex h-[20px] w-[22px] items-center justify-center"><svg width="12" height="15" viewBox="0 0 12 15"><path d="M.5.5h11v14H.5z" fill="#333" stroke={L} /><path d="M3 4h6M3 7h5M3 10h3" stroke={L} /></svg></button>
          <div className="mx-[2px] my-px h-px bg-[#666666]" />
          <button aria-label="高级过滤器" className="flex h-[20px] w-[22px] items-center justify-center"><svg width="15" height="16" viewBox="0 0 15 16"><path d="M0 0h14L9 7v7l-3-2V7z" fill="#999" /><circle cx="11" cy="12" r="3" fill="#444" stroke="#999" strokeWidth="2" /></svg></button>
          <button aria-label="过滤器" className="flex h-[20px] w-[22px] items-center justify-center"><svg width="13" height="14" viewBox="0 0 13 14"><path d="M0 0h13L8 6v8l-3-2V6z" fill="#e2e2e2" /></svg></button>
          <button aria-label="集合" className="flex h-[20px] w-[22px] items-center justify-center"><svg width="14" height="12" viewBox="0 0 14 12"><path d="M.5 2.500h2v-2h3v2h3v-2h3v2h2v9H.5z" fill="none" stroke="#ddd" /></svg></button>
        </div>
        <div className="ml-[2px] flex w-[111px] flex-col border-r border-[#38383f]">
          <div className="h-[20px] border-b border-[#505050] pl-[3px] text-[12px] leading-[20px] whitespace-nowrap text-white">名称(按升序排序)</div>
          <div className="flex h-[20px] items-center">
            <svg width="13" height="10" viewBox="0 0 13 10" className="ml-[19px]" aria-hidden="true"><path d="M.5 5c3-5 9-5 12 0-3 4-9 4-12 0z" fill="none" stroke={L} strokeWidth="1.300" /><circle cx="6.500" cy="5" r="2.200" fill={L} /></svg>
            <span className="ml-[4px] size-[10px] rounded-full bg-[#dcdcdc]" />
            <span className="ml-[4px] h-[19px] flex-1 bg-[#4e4e4e] pl-[4px] font-['Noto_Sans',sans-serif] text-[12px] leading-[19px] text-[#eeeeee]">Box001</span>
          </div>
          <div className="mt-auto flex h-[17px] items-center bg-[#f0f0f0] px-[4px] text-[#333333]">
            <button aria-label="向左"><svg width="8" height="8" viewBox="0 0 8 8"><path d="M6 0L2 4l4 4" fill="none" stroke="#333" strokeWidth="1.500" /></svg></button>
            <span className="ml-[5px] h-[16px] w-[34px] bg-[#cdcdcd]" />
            <button aria-label="向右" className="ml-auto"><svg width="8" height="8" viewBox="0 0 8 8"><path d="M2 0l4 4-4 4" fill="none" stroke="#333" strokeWidth="1.500" /></svg></button>
          </div>
        </div>
      </div>
      <div className="h-[32px] pr-[6px] text-right text-[12px] leading-[14px] text-[#46466e]">»</div>
    </section>
  );
}

function LayoutStrip() {
  return (
    <div className="flex w-[39px] shrink-0 flex-col pt-[7px]">
      <DotsH className="ml-[1px] w-[50px]" />
      <div className="mt-[3px] mb-[4px] flex flex-1 flex-col justify-end border-r-2 border-[#242424] bg-[#303030]">
        <button aria-label="创建新的视口布局" className="mb-[12px] ml-[9px] flex h-[18px] w-[19px] items-center justify-center rounded-[2px] bg-[#4a4a4a]"><svg width="6" height="9" viewBox="0 0 6 9"><path d="M0 0l6 4.500L0 9z" fill="#ddd" /></svg></button>
        <button aria-label="标准视口布局" className="ml-[2px] flex h-[43px] w-[36px] items-center justify-center rounded-[2px] bg-linear-to-b from-[#44628c] to-[#3f80d8]"><span className="h-[28px] w-[30px] border-2 border-[#2d3e55] bg-linear-to-br from-[#5a6673] to-[#525a62]" /></button>
      </div>
    </div>
  );
}

/* ---------- viewport ---------- */

function Viewport() {
  const rows = Array.from({ length: 30 }, (_, k) => k - 15);
  const cols = Array.from({ length: 24 }, (_, k) => k - 13);
  return (
    <main className="relative mt-[5px] mb-[2px] min-w-0 flex-1 border-2 border-[#7a7022] bg-[#353535]">
      <svg className="h-full w-full" viewBox="236 126 1433 813" preserveAspectRatio="xMinYMin slice" fill="none" role="img" aria-label="正交视口">
        <g stroke="#505050" shapeRendering="crispEdges">
          {rows.map((k) => <path key={k} d={`M235 ${576.7 + 31.45 * k}L1670 ${554.7 + 31.45 * k}`} />)}
          {cols.map((k) => <path key={k} d={`M${1004.3 + 71.85 * k} 126L${1069 + 71.85 * k} 939`} />)}
        </g>
        <path d="M235 387L1670 365M1004.300 126L1069 939" stroke="#000" shapeRendering="crispEdges" />
        <path d="M235 126H1114L1126 276 235 290z" fill="#8aaed5" />
        <path d="M235 290L1126 276V541.500L235 555z" fill="#7b97b6" />
        <path d="M898.500 508v55" stroke="#666" />
        <path d="M827 598.500L970 596.500M896.500 563L900.500 629" stroke="#22e822" strokeWidth="1.200" />
        <path d="M887.500 588.500h19v19h-19z" stroke="#22e822" />
        <path d="M970 596.500h24" stroke="#a02020" />
        <path d="M998 591l5 6M1003 591l-5 6" stroke="#a02020" />
        <path d="M899 503h4l-4 6h4" stroke="#3c4a5a" strokeWidth="1.300" />
        <path d="M895 550l2 4 2-4M897 554l-1 4" stroke="#7c6f60" />
        <rect x="715.500" y="490.500" width="628" height="292" stroke="#fafa32" shapeRendering="crispEdges" />
        <path d="M260.500 913v-20M261 887h4l-4 5h4" stroke="#1414c8" strokeWidth="1.300" />
        <path d="M260 913l3-13M261 899l2 3 3-4" stroke="#148c14" strokeWidth="1.300" />
        <path d="M260 912.500h20M283 909l5 6M288 909l-5 6" stroke="#c01414" strokeWidth="1.300" />
        <ellipse cx="1616" cy="197" rx="31" ry="16" stroke="#878b8e" strokeWidth="6" />
        <ellipse cx="1616" cy="197" rx="34" ry="19" stroke="#b0b4b6" />
        <path d="M1601 165l26-2 3 2 1 33-28 2z" fill="#999" />
        <path d="M1601 180l29-1" stroke="#8a8a8a" />
        <g fill="#707070" fontFamily="Noto Sans CJK SC" fontSize="11"><text x="1610" y="176">上</text><text x="1609" y="193">前</text></g>
        <g fill="#b8b8b8" fontFamily="Noto Sans CJK SC" fontSize="9"><text x="1611" y="220">南</text><text x="1575" y="199">西</text><text x="1646" y="198">东</text></g>
      </svg>
      <div className="absolute top-[6px] left-[4px] flex gap-[6px] text-[12px] leading-[16px] text-[#dfe6ee]">
        <button>[+]</button><button>[正交]</button><button>[标准]</button><button>[默认明暗处理]</button>
      </div>
    </main>
  );
}

/* ---------- command panel ---------- */

const Grip = () => (
  <svg width="7" height="7" viewBox="0 0 7 7" className="mr-[7px] ml-auto" aria-hidden="true">
    <path d="M0 1h7M0 3.500h7M0 6h7" stroke="#8a8a8a" strokeDasharray="1 2" />
  </svg>
);

function Rollout({ title, open = true, className = "", children }: { title: string; open?: boolean; className?: string; children?: ReactNode }) {
  return (
    <section className={`mb-[4px] rounded-[2px] border border-[#484848] bg-[#525252] ${className}`}>
      <h2 className="flex h-[16px] items-center">
        <button aria-expanded={open} className="flex items-center text-[12px] leading-[16px] font-bold text-white">
          <svg width="6" height="6" viewBox="0 0 6 6" className="mr-[6px] ml-[5px]">{open ? <path d="M0 1h6L3 6z" fill="#ccc" /> : <path d="M1 0l4 3-4 3z" fill="#ccc" />}</svg>
          {title}
        </button>
        <Grip />
      </h2>
      {children}
    </section>
  );
}

function Check({ label, checked, className }: { label: string; checked?: boolean; className: string }) {
  return (
    <label className={`flex items-center gap-[3px] text-[12px] leading-[16px] text-white ${className}`}>
      <span className="grid place-items-center">
        <input type="checkbox" defaultChecked={checked} className="peer size-[10px] appearance-none bg-[#686868] [grid-area:1/1]" />
        <svg width="9" height="8" viewBox="0 0 9 8" className="pointer-events-none hidden [grid-area:1/1] peer-checked:block"><path d="M1 4l2.500 3L8 1" fill="none" stroke="#f0f0f0" strokeWidth="1.700" /></svg>
      </span>
      {label}
    </label>
  );
}

function Spinner({ label, value }: { label: string; value: string }) {
  return (
    <label className="flex h-[15px] items-center text-[12px] text-[#eeeeee]">
      <span className="w-[105px] text-right">{label}:</span>
      <span className="ml-[7px] flex h-[15px] w-[67px] items-center border border-[#474747] bg-[#656565]">
        <input defaultValue={value} className={`w-[54px] bg-transparent pl-[2px] text-[11px] text-[#dddddd] outline-none ${MONO}`} />
        <svg width="6" height="10" viewBox="0 0 6 10" className="ml-[2px]"><path d="M1 4h4L3 1zM1 6h4L3 9z" fill="#ddd" /></svg>
      </span>
    </label>
  );
}

const PRIMITIVES = ["长方体", "圆锥体", "球体", "几何球体", "圆柱体", "管状体", "圆环", "四棱锥", "茶壶", "平面", "加强型文本"];

const PANEL_TABS: [string, ReactNode][] = [
  ["创建", <path d="M13 1v24M1 13h24" stroke="#f0f0f0" strokeWidth="2.500" />],
  ["修改", <><path d="M3 3h20v20H3z" stroke={T} strokeWidth="1.300" strokeDasharray="5 2" /><path d="M1 1h4v4H1zM21 1h4v4h-4zM1 21h4v4H1zM21 21h4v4h-4z" fill="#3a3a3a" stroke={T} /><path d="M7 20c0-8 5-12 12-12" stroke="#aaa" strokeWidth="3" /></>],
  ["层次", <><path d="M4 1h18v9H4z" fill="#aaa" /><path d="M13 10v4M4 20v-6h18v6" stroke="#3b9a94" strokeWidth="1.500" /><path d="M1 19h6v6H1zM19 19h6v6h-6z" fill={T} /></>],
  ["运动", <><circle cx="9" cy="13" r="8" stroke="#3b8883" strokeWidth="1.500" /><circle cx="13" cy="13" r="9" fill="#3a3a3a" stroke="#3b8883" strokeWidth="1.500" /><circle cx="17" cy="13" r="9" fill="#aaa" /></>],
  ["显示", <path d="M1 3h24v16H1zM9 21h8v3H9z" fill="#aaa" />],
  ["实用程序", <path d="M4 1l5 1 4 5-1 3 13 11c2 3-1 6-4 4L10 13c-4 2-9-1-9-7l4 3 3-3z" fill="#aaa" />],
];

const CATEGORIES: [string, ReactNode][] = [
  ["几何体", <circle cx="13" cy="13" r="9.500" fill={L} stroke="#2f4f7c" />],
  ["图形", <><circle cx="9" cy="9" r="8" fill={L} /><path d="M11 11h14v14H11z" fill={L} stroke="#444" strokeWidth="1.500" /><path d="M11 17c3 0 6-3 6-6" stroke="#444" strokeWidth="1.500" /></>],
  ["灯光", <path d="M5 9c0-10 16-10 16 0 0 4-5 5-5 9h-6c0-4-5-5-5-9zM9 20h8v4H9z" fill={L} />],
  ["摄影机", <path d="M0 4h18v18H0zM20 13l6-8v16z" fill={L} />],
  ["辅助对象", <path d="M2 0l24 24H2zM8 14v5h5z" fillRule="evenodd" fill={L} />],
  ["空间扭曲", <path d="M0 6c5-4 9 3 14 1s7-2 12 0M0 13c5-4 9 3 14 1s7-2 12 0M0 20c5-4 9 3 14 1s7-2 12 0" stroke={L} strokeWidth="2.200" />],
  ["系统", <><circle cx="6" cy="6" r="4.500" stroke={L} strokeWidth="2.500" strokeDasharray="4 1" /><circle cx="18" cy="17" r="6" stroke={L} strokeWidth="3.500" strokeDasharray="5 1" /></>],
];

function CommandPanel() {
  return (
    <aside className="w-[249px] shrink-0 border-l-4 border-[#444444] pt-[6px] pl-[2px]">
      <DotsH className="mr-[4px]" />
      <div className="flex h-[31px] items-end border-b border-[#3e3e3e]">
        {PANEL_TABS.map(([n, art], i) => (
          <button key={n} aria-label={n} className={`mr-[2px] flex h-[27px] w-[30px] items-center justify-center ${i === 0 ? "bg-[#464646]" : "bg-[#3a3a3a]"}`}><Svg size={17}>{art}</Svg></button>
        ))}
      </div>
      <div className="mt-[5px] flex gap-[2px] pl-[5px]">
        {CATEGORIES.map(([n, art], i) => (
          <button key={n} aria-label={n} className={`flex size-[22px] items-center justify-center ${i === 0 ? "rounded-[2px] bg-[#5a87c2]" : ""}`}><Svg size={i === 0 ? 20 : 14}>{art}</Svg></button>
        ))}
      </div>
      <Drop label="类别" value="标准基本体" className="mt-[7px] mr-[5px] ml-[3px] h-[20px] bg-[#626262] text-[12px] text-[#e4e4e4]" />
      <div className="mt-[6px] mr-[5px] ml-[4px] border-r-[3px] border-[#3b3b3b] pr-[5px]">
        <Rollout title="对象类型" className="h-[168px] pt-[1px]">
          <Check label="自动栅格" className="mt-[4px] ml-[64px]" />
          <div className="mt-[2px] ml-[31px] grid w-[162px] grid-cols-2 gap-x-[4px] gap-y-[5px]">
            {PRIMITIVES.map((p, i) => (
              <button key={p} className={`h-[16px] rounded-[2px] text-[12px] leading-[15px] text-[#eeeeee] ${i === 0 ? "bg-[#5a87c2]" : "bg-[#656565]"}`}>{p}</button>
            ))}
          </div>
        </Rollout>
        <Rollout title="名称和颜色" className="h-[55px]">
          <div className="mt-[8px] ml-[37px] flex items-center gap-[4px]">
            <input aria-label="名称" defaultValue="Box001" className={`h-[18px] w-[130px] bg-[#656565] pl-[3px] text-[10px] text-[#e4e4e4] outline-none ${MONO}`} />
            <button aria-label="颜色" className="h-[19px] w-[17px] border border-black bg-white" />
          </div>
        </Rollout>
        <Rollout title="创建方法" className="h-[46px]">
          <div className="mt-[6px] ml-[57px] flex gap-[16px] text-[12px] leading-[16px] text-[#eeeeee]">
            <label className="flex items-center gap-[8px]"><input type="radio" name="method" className="size-[9px] appearance-none rounded-full bg-[#666666] checked:bg-[#eeeeee]" />立方体</label>
            <label className="flex items-center gap-[9px]"><input type="radio" name="method" defaultChecked className="size-[8px] appearance-none rounded-full bg-[#666666] checked:bg-[#eeeeee]" />长方体</label>
          </div>
        </Rollout>
        <Rollout title="键盘输入" open={false} className="h-[18px]" />
        <Rollout title="参数" className="h-[208px]">
          <div className="mt-[10px] flex flex-col gap-[6px]">
            <Spinner label="长度" value="0.0" />
            <Spinner label="宽度" value="0.0" />
            <Spinner label="高度" value="0.0" />
          </div>
          <div className="mt-[13px] flex flex-col gap-[6px]">
            <Spinner label="长度分段" value="1" />
            <Spinner label="宽度分段" value="1" />
            <Spinner label="高度分段" value="1" />
          </div>
          <div className="mt-[10px] ml-[41px] flex flex-col gap-[6px]">
            <Check label="生成贴图坐标" checked className="" />
            <Check label="真实世界贴图大小" checked className="" />
          </div>
        </Rollout>
        <div className="h-[209px]" />
      </div>
    </aside>
  );
}

/* ---------- timeline and status ---------- */

function Timeline() {
  return (
    <div className="flex shrink-0">
      <div className={`mx-[2px] h-[46px] w-[4px] ${DOTS}`} />
      <div className="min-w-0 flex-1">
        <div className={`flex h-[24px] items-center gap-[2px] text-[11px] text-[#e2e2e2] ${MONO}`}>
          <button aria-label="上一帧" className="flex h-[16px] w-[15px] items-center justify-center rounded-[2px] bg-[#595959]"><svg width="5" height="9" viewBox="0 0 5 9"><path d="M4.500 0L.5 4.500l4 4.500" fill="none" stroke="#e2e2e2" /></svg></button>
          <button className="h-[16px] w-[123px] rounded-[2px] bg-[#656565] leading-[15px]">0 / 100</button>
          <button aria-label="下一帧" className="flex h-[16px] w-[15px] items-center justify-center rounded-[2px] bg-[#595959]"><svg width="5" height="9" viewBox="0 0 5 9"><path d="M.5 0l4 4.500-4 4.500" fill="none" stroke="#e2e2e2" /></svg></button>
        </div>
        <div className="flex h-[26px] border-t border-[#101010]">
          <button aria-label="打开迷你曲线编辑器" className="flex w-[49px] items-center pl-[13px]">
            <svg width="16" height="13" viewBox="0 0 16 13" fill="none"><path d="M1.500 1v11" stroke="#ccc" strokeWidth="3" strokeDasharray="1 1" /><path d="M5 10c2-9 3-9 5-4s3 7 5-2" stroke={T} strokeWidth="1.300" /></svg>
          </button>
          <div className={`flex flex-1 bg-[#2b2b2b] pr-[50px] text-[11px] text-[#cccccc] ${MONO}`}>
            {Array.from({ length: 101 }, (_, f) => (
              <div key={f} className="flex w-0 flex-1 flex-col items-center">
                <div className={f === 0 ? "flex w-[8px] flex-col items-center bg-[#8a8420] text-[#f4ee8c]" : "flex w-0 flex-col items-center"}>
                  <span className="h-[12px] w-px bg-[#747474]" />
                  {f % 5 === 0 && f <= 75 && <span className="leading-[10px]">{f}</span>}
                  {f % 5 === 0 && <span className="h-[3px] w-px bg-[#7d7d7d]" />}
                </div>
              </div>
            ))}
          </div>
        </div>
      </div>
    </div>
  );
}

function Coord({ axis, value, className }: { axis: string; value: string; className: string }) {
  return (
    <label className={`flex items-center gap-[4px] ${className}`}>
      <span className="w-[12px] font-['Liberation_Serif',serif] text-[12px] text-white">{axis}:</span>
      <input defaultValue={value} className="h-[17px] w-[57px] bg-[#5a5a5a] pl-[3px] text-[11px] text-[#8f8f8f] outline-none" />
    </label>
  );
}

function StatusBar() {
  return (
    <footer className={`flex h-[57px] shrink-0 bg-[#444444] text-[12px] text-[#eeeeee] ${MONO}`}>
      <div className="mt-[5px] ml-[4px] h-[47px] w-[98px] border-2 border-[#9a9a9a] border-r-white border-b-white bg-white">
        <div className="h-[20px] bg-[#dcc3c3]" />
        <div className="mt-[2px] overflow-hidden border-t border-[#888888] pl-[4px] text-[12px] leading-[20px] whitespace-nowrap text-[#888888]">MAXScript 迷</div>
      </div>
      <div className="mr-[4px] ml-[5px] mt-[4px] h-[49px] w-px bg-[#222222]" />
      <div className={`pt-[9px] text-[13px] leading-[20px] whitespace-pre ${SANS}`}>
        <p>选择了 1 个 对象</p>
        <p className="mt-[5px]">栅格点 捕捉 场景根 的坐标位置:   [-20.0,  -70.0,  0.0]</p>
      </div>
      <div className="mr-[515px] ml-auto flex flex-col items-end pt-[10px]">
        <div className="flex items-center">
          <button aria-label="孤立当前选择" className="mr-[13px]"><svg width="15" height="16" viewBox="0 0 15 16" fill="none"><path d="M1 4V1h3M11 1h3v3M14 12v3h-3M4 15H1v-3" stroke="#ddd" strokeWidth="1.300" /><path d="M4 4h7v8H4z" fill={T} /></svg></button>
          <button aria-label="选择锁定切换" className="mr-[13px]"><svg width="13" height="16" viewBox="0 0 13 16"><path d="M3.500 7V4c0-4 6-4 6 0v3" fill="none" stroke="#1f1f1f" strokeWidth="1.500" /><path d="M1 7h11v8H1z" fill="#555" stroke="#1f1f1f" /><path d="M6.500 9v4" stroke="#111" strokeWidth="2" /></svg></button>
          <button aria-label="绝对模式变换输入" className="mr-[8px]"><svg width="15" height="15" viewBox="0 0 15 15" fill="none"><path d="M1 1h13v13H1z" stroke="#ddd" strokeWidth="1.500" /><circle cx="7.500" cy="7.500" r="3" stroke="#ddd" strokeWidth="1.800" /><path d="M7.500 1v3M7.500 11v3M1 7.500h3M11 7.500h3" stroke="#ddd" strokeWidth="1.500" /></svg></button>
          <Coord axis="X" value="-20.0" className="mr-[13px]" />
          <Coord axis="Y" value="-70.0" className="mr-[13px]" />
          <Coord axis="Z" value="0.0" className="mr-[16px]" />
          <span className={`w-[68px] whitespace-nowrap text-white ${SANS}`}>栅格 = 10.0</span>
        </div>
        <button className={`mt-[6px] flex items-center gap-[5px] text-[11px] whitespace-nowrap ${SANS}`}>
          <span className="flex h-[20px] w-[21px] items-center justify-center rounded-[2px] bg-[#5a87c2]">
            <svg width="14" height="15" viewBox="0 0 14 15" fill="none" stroke="#e2e2e2"><path d="M7 1l6 3v7l-6 3-6-3V4zM1 4l6 3 6-3M7 7v7" /></svg>
          </span>
          <span className="w-[68px] text-left">添加时间标记</span>
        </button>
      </div>
    </footer>
  );
}

function Taskbar() {
  const bits = ["bg-[#eeeeee]", "bg-[#7d2c8c]", "bg-[#2f6fe0]", "bg-[#0d0d0d]", "bg-[#2c7fd0]", "bg-[#a347c4]", "bg-[#8a8a8a]"];
  return (
    <div className="flex h-[8px] shrink-0 items-end bg-[#0d0d0d]">
      <div className="flex pl-[15px]">
        {[0, 1, 2].map((n) => <span key={n} className="mr-[25px] h-px w-[10px] bg-[#bbbbbb]" />)}
      </div>
      <div className="ml-[120px] flex">
        {bits.map((b, i) => <span key={i} className="flex w-[37px] justify-center"><span className={`h-px w-[10px] ${b}`} /></span>)}
      </div>
      <span className="flex h-[8px] w-[36px] items-end justify-center bg-[#2c2c2c]"><span className="h-px w-[16px] bg-white" /></span>
    </div>
  );
}

/* ---------- overlays ---------- */

function Watermark() {
  return (
    <div className="absolute right-0 bottom-0 flex h-[250px] w-[499px] bg-[#fefefe] pt-[67px] pl-[42px] text-black">
      <svg width="140" height="113" viewBox="190 285 420 340" className="shrink-0" aria-hidden="true">
        <path d="M224 438C240 360 350 296 470 296c90 2 145 60 108 140l-8-2c18-70-30-112-120-112-90 4-170 40-226 116z" fill="#94c11f" />
        <path d="M396 350l72 32v28l-46 22v110l-26 4zM500 425l48 22-30 50-18 8z" fill="#d9dbde" />
        <path d="M230 488l58-36v92c-30-10-50-28-58-56z" fill="#1a4496" />
        <path d="M316 376l74-34-4 210h-70z" fill="url(#tower)" />
        <path d="M428 440l60-28v108l-58 20z" fill="#1a4496" />
        <path d="M219 458c-40 80 10 156 110 156 120 0 240-80 268-188-36 70-130 138-240 144-90 2-148-40-138-112z" fill="#123a8f" />
      </svg>
      <div className="ml-[-3px] pt-[18px] whitespace-nowrap italic">
        <div className="font-['Noto_Sans_CJK_SC',sans-serif] text-[54px] leading-[54px] font-black">土木工程网</div>
        <div className="font-['Noto_Sans',sans-serif] text-[36px] leading-[32px] font-medium">www.civilcn.com</div>
      </div>
    </div>
  );
}

export default function App() {
  return (
    <div className={`relative flex h-screen flex-col overflow-hidden bg-[#444444] ${SANS}`}>
      <Gradients />
      <TitleBar />
      <MenuBar />
      <Toolbar />
      <div className="flex min-h-0 flex-1">
        <ShortcutBar />
        <div className="flex min-w-0 flex-1 flex-col">
          <Ribbon />
          <div className="flex min-h-0 flex-1">
            <LayoutStrip />
            <SceneExplorer />
            <Viewport />
            <CommandPanel />
          </div>
          <Timeline />
        </div>
      </div>
      <StatusBar />
      <Taskbar />
      <svg width="120" height="292" viewBox="596 98 120 292" className="pointer-events-none absolute top-[98px] left-[596px]" aria-hidden="true">
        <path d="M711 99l2 20-5-2L598 388h-1L702 116l-5-2z" fill="#ffff00" />
      </svg>
      <Watermark />
    </div>
  );
}
